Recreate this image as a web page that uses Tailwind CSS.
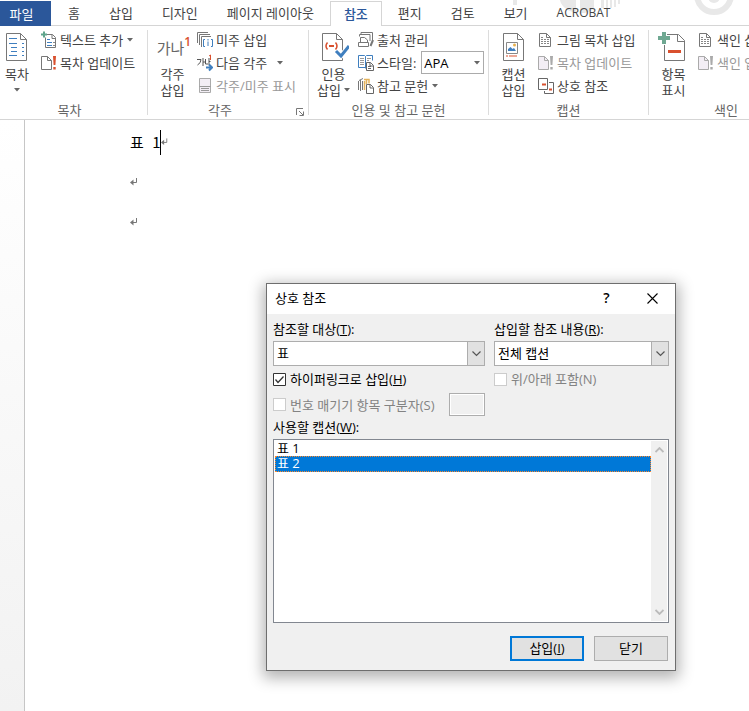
<!DOCTYPE html>
<html lang="ko">
<head>
<meta charset="utf-8">
<title>상호 참조</title>
<script src="https://cdn.jsdelivr.net/npm/@tailwindcss/browser@4"></script>
</head>
<body class="relative flex min-h-screen flex-col overflow-hidden bg-white font-['Open_Sans','Noto_Sans_CJK_KR',sans-serif] text-[13px] leading-4 text-[#444]">

<svg width="0" height="0" class="absolute" aria-hidden="true">
  <defs>
    <symbol id="page" viewBox="0 0 16 16"><path d="M1.500 1.500h7l4 4v9h-11z" fill="#fff" stroke="#777"/><path d="M8.500 1.500v4h4" fill="none" stroke="#777"/><path d="M3 5.500h3M3 7.500h8M3 9.500h8M3 11.500h8" stroke="#888" stroke-dasharray="2 1"/></symbol>
    <symbol id="page-off" viewBox="0 0 16 16"><path d="M.5 1.500h6l4 4v9H.5z" fill="#f3eef5" stroke="#aaa"/><path d="M6.500 1.500v4h4" fill="none" stroke="#aaa"/><path d="M12 1h3l-.6 9h-1.800zM12.300 12h2.400v2.500h-2.400z" fill="#aaa"/></symbol>
    <symbol id="down" viewBox="0 0 6 4"><path d="M0 0h6L3 3.500z" fill="#666"/></symbol>
    <symbol id="return" viewBox="0 0 9 8"><path d="M6.500 0v4.500H1.500" fill="none" stroke="#777"/><path d="M0 4.500L3.500 1.500v6z" fill="#777"/></symbol>
  </defs>
</svg>

<header>
  <svg class="absolute right-0 top-0" width="249" height="26" viewBox="0 0 249 26" fill="#e8e8e8" aria-hidden="true">
    <path d="M13 0h4v5h-4zM60 0h16v13C67 11 61 6 60 0zM80 0h5v13h-5zM85 0h9v8C91 11 88 12 85 13zM101 0h3v8h-3zM106 0h2v8h-2zM110 0h2v8h-2zM114 0h2v7h-2zM118 0h2v4h-2z"/>
    <circle cx="214" cy="-5" r="17" fill="none" stroke="#e8e8e8" stroke-width="6"/><circle cx="214" cy="-3" r="6"/>
  </svg>
  <nav class="relative flex h-[26px] gap-[3px] whitespace-nowrap border-b border-[#d5d5d5] pt-px">
    <button class="mr-px h-[25px] w-[51px] shrink-0 bg-[#2b579a] pr-2 text-white">파일</button>
    <button class="px-[13px]">홈</button>
    <button class="px-[13px]">삽입</button>
    <button class="px-[13px]">디자인</button>
    <button class="px-[13px]">페이지 레이아웃</button>
    <button class="h-[25px] border border-b-0 border-[#d5d5d5] bg-white px-[13px] font-medium text-[#2b579a]">참조</button>
    <button class="px-[13px]">편지</button>
    <button class="px-[13px]">검토</button>
    <button class="px-[13px]">보기</button>
    <button class="px-[13px] text-[12px]">ACROBAT</button>
  </nav>

  <div class="flex overflow-hidden whitespace-nowrap border-b border-[#d5d5d5] pb-px pt-0.5">
    <section class="w-[147px] shrink-0">
      <div class="flex">
        <button class="flex w-[34px] flex-col items-center">
          <span class="flex h-[38px] items-center"><svg width="22" height="30" viewBox="0 0 22 30"><path d="M.5 1.500h14l6 6v21H.5z" fill="#fff" stroke="#777"/><path d="M14.500 1.500v6h6" fill="none" stroke="#777"/><path d="M3 6.500h8M3 11.500h8M5 15.500h6M5 19.500h6M3 23.500h8M16 11.500h2M16 15.500h2M16 19.500h2M16 23.500h2" stroke="#3f7fbf"/></svg></span>
          <span>목차</span>
          <span class="flex h-4 items-center"><svg width="6" height="4"><use href="#down"/></svg></span>
        </button>
        <div class="ml-[7px] flex flex-col">
          <button class="flex h-[23px] items-center gap-[3px]"><svg width="16" height="18" viewBox="0 0 16 18"><path d="M4.500 3.500h7l3 3v10h-10z" fill="#fff" stroke="#777"/><path d="M11 3.500v4h4" fill="none" stroke="#777"/><path d="M6 8.500h3M6 11.500h5M6 14.500h5" stroke="#3f7fbf"/><path d="M12 11.500h2M12 14.500h2" stroke="#888"/><path d="M0 3.500h6M3 .5v6" stroke="#fff" stroke-width="4"/><path d="M0 3.500h6M3 .5v6" stroke="#5fa58c" stroke-width="2"/></svg><span>텍스트 추가</span><svg class="ml-px" width="6" height="4"><use href="#down"/></svg></button>
          <button class="flex h-[23px] items-center gap-[3px]"><svg width="16" height="16" viewBox="0 0 16 16"><path d="M.5 1.500h6l4 4v9H.5z" fill="#fff" stroke="#777"/><path d="M6.500 1.500v4h4" fill="none" stroke="#777"/><path d="M12 1h3l-.6 9h-1.800zM12.300 12h2.400v2.500h-2.400z" fill="#d9502e"/></svg><span>목차 업데이트</span></button>
          <span class="h-[23px]"></span>
        </div>
      </div>
      <h2 class="mt-1 pr-2 text-center text-[#666]">목차</h2>
    </section>
    <div class="mt-0.5 h-[85px] w-px shrink-0 bg-[#dcdcdc]"></div>

    <section class="w-[160px] shrink-0">
      <div class="flex">
        <button class="flex w-[49px] flex-col items-center">
          <span class="flex h-[38px] items-start pl-[3px] pt-2 text-[15px] leading-6 text-[#666]">가나<sup class="top-0 text-[12px] font-semibold leading-3 text-[#d9502e]">1</sup></span>
          <span>각주<br>삽입</span>
        </button>
        <div class="flex flex-col">
          <button class="flex h-[23px] items-center gap-[3px]"><svg width="16" height="16" viewBox="0 0 16 16" fill="none"><path d="M.5 11V.5H11M2.500 13V2.500H13M4.500 15V4.500H14" stroke="#777"/><path d="M8 7.500H6.500v7H8M14 7.500h1.500v7H14M11 9.500V14M11 7v1.500" stroke="#3f7fbf"/></svg><span>미주 삽입</span></button>
          <button class="flex h-[23px] items-center gap-[3px]"><svg width="16" height="18" viewBox="0 0 16 18" fill="none"><path d="M0 5.500h4Q4 9 .5 11M6 4v8M6 8h2M8.500 5v5H11M12 4v7M12 7.500h1.500" stroke="#555"/><path d="M12 2l1.500-1v5" stroke="#d9502e"/><path d="M9 13.500h5M12 10.500l3 3-3 3" stroke="#3f7fbf" stroke-width="2"/></svg><span>다음 각주</span><svg class="ml-[7px]" width="6" height="4"><use href="#down"/></svg></button>
          <button class="flex h-[23px] items-center gap-[3px] text-[#999]" disabled><svg width="16" height="16" viewBox="0 0 16 16"><path d="M2.500.5h11v14h-11z" fill="#f3eef5" stroke="#aaa"/><path d="M2.500 8.500h11M4 10.500h8M4 12.500h8" stroke="#999"/></svg><span>각주/미주 표시</span></button>
        </div>
      </div>
      <div class="relative mt-1">
        <h2 class="pr-4 text-center text-[#666]">각주</h2>
        <button class="absolute bottom-0 right-1" aria-label="각주 옵션"><svg width="8" height="12" viewBox="0 0 8 12" fill="none" stroke="#777"><path d="M.5 9V2.500H7M3 5l4 4M7.500 5.500v4h-4"/></svg></button>
      </div>
    </section>
    <div class="mt-0.5 h-[85px] w-px shrink-0 bg-[#dcdcdc]"></div>

    <section class="w-[179px] shrink-0">
      <div class="flex">
        <button class="flex w-[49px] flex-col items-center">
          <span class="flex h-[38px] items-center pl-0.5"><svg width="28" height="30" viewBox="0 0 28 30"><path d="M1.500 1.500h14l6 6v21h-20z" fill="#fff" stroke="#777"/><path d="M15.500 1.500v6h6" fill="none" stroke="#777"/><path d="M6.500 10.500q-3 3.500 0 7M14.500 10.500q3 3.500 0 7" fill="none" stroke="#d9502e" stroke-width="1.500"/><path d="M8 14h5" stroke="#d9502e" stroke-width="2"/><path d="M15 19l5 5 8-10" fill="none" stroke="#fff" stroke-width="5"/><path d="M15 19l5 5 8-10" fill="none" stroke="#3f7fbf" stroke-width="3"/></svg></span>
          <span>인용</span>
          <span class="flex items-center gap-[3px]">삽입<svg width="6" height="4"><use href="#down"/></svg></span>
        </button>
        <div class="flex flex-col">
          <button class="flex h-[23px] items-center gap-[3px]"><svg width="16" height="16" viewBox="0 0 16 16" fill="none" stroke="#777"><path d="M3 2.500V.5h11.500V8M1.500 4.500v-2h10.500V9M.5 10.500v4h10v-4zM2.500 10V5.500h4l3 2.500v2"/><path d="M12.500 14l2.500-6" stroke-width="2"/></svg><span>출처 관리</span></button>
          <div class="flex h-[23px] items-center gap-[3px]"><svg width="16" height="16" viewBox="0 0 16 16" fill="none"><path d="M7.500 12.500H.5V.5h6l1 1 1-1h6v5M7.500 1.500v12" stroke="#3f7fbf"/><path d="M2 3.500h4M2 5.500h4M2 7.500h4M2 9.500h4M9 3.500h4M9 5.500h2" stroke="#999"/><path d="M8.500 7.500h4l3 3v5h-7z" fill="#fff" stroke="#666"/><path d="M12 7.500v3.500h3M10 11.500h3M10 13.500h3" stroke="#666"/></svg><label for="style">스타일:</label>
            <span class="relative ml-0.5"><select id="style" class="block h-[23px] w-[63px] appearance-none border border-[#ababab] bg-white pl-0.5 text-[13px] text-black"><option>APA</option></select><svg class="pointer-events-none absolute right-1 top-[10px]" width="6" height="4"><use href="#down"/></svg></span>
          </div>
          <button class="flex h-[23px] items-center gap-[3px]"><svg width="16" height="16" viewBox="0 0 16 16" fill="none"><path d="M.5 3v9M2.500 2v11M1 2.500L5 .5M4.500 3v9" stroke="#777"/><path d="M6.500 3v9M8.500 2v4M6 1.500h5v4" stroke="#e3b25c" stroke-width="1.500"/><path d="M8.500 6.500h4l3 3v6h-7z" fill="#fff" stroke="#666"/><path d="M12 6.500V10h3" stroke="#666"/></svg><span>참고 문헌</span><svg class="ml-px" width="6" height="4"><use href="#down"/></svg></button>
        </div>
      </div>
      <h2 class="mt-1 text-center text-[#666]">인용 및 참고 문헌</h2>
    </section>
    <div class="mt-0.5 h-[85px] w-px shrink-0 bg-[#dcdcdc]"></div>

    <section class="w-[159px] shrink-0">
      <div class="flex">
        <button class="flex w-[49px] flex-col items-center">
          <span class="flex h-[38px] items-center"><svg width="22" height="30" viewBox="0 0 22 30"><path d="M.5 1.500h14l6 6v21H.5z" fill="#fff" stroke="#777"/><path d="M14.500 1.500v6h6" fill="none" stroke="#777"/><path d="M3.500 10.500h11v11h-11z" fill="#fff" stroke="#888"/><path d="M5 19v-2l2.500-2 2 2 1.500-1 2 3z" fill="#3f7fbf"/><circle cx="11.500" cy="13" r="1.500" fill="#e8b04c"/><path d="M3 24h2M6 24h8" stroke="#d9502e"/></svg></span>
          <span>캡션<br>삽입</span>
        </button>
        <div class="flex flex-col">
          <button class="flex h-[23px] items-center gap-[3px]"><svg width="16" height="16"><use href="#page"/></svg><span>그림 목차 삽입</span></button>
          <button class="flex h-[23px] items-center gap-[3px] text-[#999]" disabled><svg width="16" height="16"><use href="#page-off"/></svg><span>목차 업데이트</span></button>
          <button class="flex h-[23px] items-center gap-[3px]"><svg width="16" height="16" viewBox="0 0 16 16" fill="none"><path d="M.5.5h9v11h-9z" stroke="#666"/><path d="M11 4.500h4.500v11h-9V13" stroke="#666"/><path d="M4 6.500h4M11 11.500h3" stroke="#d9502e" stroke-width="2"/></svg><span>상호 참조</span></button>
        </div>
      </div>
      <h2 class="mt-1 text-center text-[#666]">캡션</h2>
    </section>
    <div class="mt-0.5 h-[85px] w-px shrink-0 bg-[#dcdcdc]"></div>

    <section class="w-[154px] shrink-0">
      <div class="flex">
        <button class="flex w-[49px] flex-col items-center">
          <span class="flex h-[38px] items-center pr-[5px]"><svg width="28" height="32" viewBox="0 0 28 32"><path d="M7.500 3.500h14l6 6v20h-20z" fill="#fff" stroke="#777"/><path d="M20.500 3.500v7h7" fill="none" stroke="#777"/><path d="M11 20.500h13" stroke="#d9502e" stroke-width="3"/><path d="M0 7h14M7 0v14" stroke="#fff" stroke-width="6"/><path d="M1 7h12M7 1v12" stroke="#6fa892" stroke-width="4"/></svg></span>
          <span>항목<br>표시</span>
        </button>
        <div class="flex flex-col">
          <button class="flex h-[23px] items-center gap-[3px]"><svg width="16" height="16"><use href="#page"/></svg><span>색인 삽입</span></button>
          <button class="flex h-[23px] items-center gap-[3px] text-[#999]" disabled><svg width="16" height="16"><use href="#page-off"/></svg><span>색인 업데이트</span></button>
          <span class="h-[23px]"></span>
        </div>
      </div>
      <h2 class="mt-1 text-center text-[#666]">색인</h2>
    </section>
  </div>
</header>

<main class="flex flex-1">
  <aside class="w-[25px] shrink-0 border-r border-[#c6c6c6] bg-linear-to-b from-white to-[#f2f2f2]"></aside>
  <article class="flex-1 pl-[105px] pt-0.5 font-['Noto_Sans_CJK_KR',sans-serif] text-[15px] leading-10 text-black">
    <p class="flex h-10 items-center"><span class="whitespace-pre">표  1</span><span class="-ml-px h-[25px] w-px bg-black"></span><svg width="8" height="8"><use href="#return"/></svg></p>
    <p class="flex h-10 items-center"><svg width="9" height="8"><use href="#return"/></svg></p>
    <p class="flex h-10 items-center"><svg width="9" height="8"><use href="#return"/></svg></p>
  </article>
</main>

<div role="dialog" aria-labelledby="title" class="absolute left-[266px] top-[283px] w-[410px] border border-[#6e6e6e] bg-[#f0f0f0] text-black shadow-[0_4px_14px_3px_rgba(0,0,0,0.3)]">
  <div class="flex h-[30px] items-center bg-white pb-0.5 pl-2">
    <h1 id="title" class="flex-1">상호 참조</h1>
    <button class="w-[45px] text-[14px] font-semibold" aria-label="도움말">?</button>
    <button class="flex w-[46px] justify-center" aria-label="창 닫기"><svg width="11" height="11" viewBox="0 0 11 11"><path d="M.5.5l10 10M10.500.5l-10 10" stroke="#000" stroke-width="1.100"/></svg></button>
  </div>
  <div class="px-1.5 pb-[9px] pt-[7px]">
    <div class="grid grid-cols-[212px_1fr] gap-x-[9px]">
      <div>
        <label for="target">참조할 대상(<u>T</u>):</label>
        <div class="relative mt-1">
          <select id="target" class="block h-[25px] w-full appearance-none border border-[#adadad] bg-white pb-0.5 pl-[3px] text-[13px]"><option>표</option></select>
          <span class="pointer-events-none absolute inset-y-0 right-0 flex w-[18px] items-center justify-center border border-[#adadad] bg-[#e1e1e1]"><svg width="9" height="6" viewBox="0 0 9 6"><path d="M.5.5l4 4 4-4" fill="none" stroke="#555" stroke-width="1.200"/></svg></span>
        </div>
        <label class="mt-[5px] flex items-center gap-1"><input type="checkbox" checked class="peer sr-only"><svg class="bg-white" width="13" height="13" viewBox="0 0 13 13" fill="none"><path d="M.5.5h12v12H.5z" stroke="#333"/><path d="M2.500 6.500l2.500 3 5.500-6" stroke="#333" stroke-width="1.300"/></svg><span>하이퍼링크로 삽입(<u>H</u>)</span></label>
      </div>
      <div>
        <label for="content">삽입할 참조 내용(<u>R</u>):</label>
        <div class="relative mt-1">
          <select id="content" class="block h-[25px] w-full appearance-none border border-[#adadad] bg-white pb-0.5 pl-[3px] text-[13px]"><option>전체 캡션</option></select>
          <span class="pointer-events-none absolute inset-y-0 right-0 flex w-[18px] items-center justify-center border border-[#adadad] bg-[#e1e1e1]"><svg width="9" height="6" viewBox="0 0 9 6"><path d="M.5.5l4 4 4-4" fill="none" stroke="#555" stroke-width="1.200"/></svg></span>
        </div>
        <label class="mt-[5px] flex items-center gap-1 text-[#838383]"><input type="checkbox" disabled class="size-[13px] appearance-none border border-[#ccc] bg-white"><span>위/아래 포함(N)</span></label>
      </div>
    </div>
    <div class="mt-1.5 flex items-center gap-3.5 text-[#838383]">
      <label class="flex items-center gap-1"><input type="checkbox" disabled class="size-[13px] appearance-none border border-[#ccc] bg-white"><span>번호 매기기 항목 구분자(S)</span></label>
      <input type="text" disabled aria-label="구분자" class="h-[23px] w-9 border border-[#adadad] bg-[#f0f0f0] shadow-[inset_0_0_0_1px_#fff]">
    </div>
    <h2 id="captions" class="mt-[3px]">사용할 캡션(<u>W</u>):</h2>
    <div class="mt-1 flex h-[184px] border border-[#828790] bg-white p-px">
      <ul role="listbox" aria-labelledby="captions" class="flex-1">
        <li role="option" aria-selected="false" class="h-[15px] pl-0.5 leading-[15px]">표 1</li>
        <li role="option" aria-selected="true" class="h-4 border border-dotted border-[#ff8728] bg-[#0078d7] pl-px leading-[13px] text-white">표 2</li>
      </ul>
      <div class="flex w-4 flex-col items-center justify-between bg-[#f0f0f0] py-1.5" aria-hidden="true">
        <svg width="9" height="6" viewBox="0 0 9 6"><path d="M.5 5l4-4 4 4" fill="none" stroke="#bbb" stroke-width="1.800"/></svg>
        <svg width="9" height="6" viewBox="0 0 9 6"><path d="M.5 1l4 4 4-4" fill="none" stroke="#bbb" stroke-width="1.800"/></svg>
      </div>
    </div>
    <div class="mt-[13px] flex justify-end gap-2.5 pr-px">
      <button class="h-[25px] w-[74px] border-2 border-[#0078d7] bg-[#e1e1e1] pb-0.5">삽입(<u>I</u>)</button>
      <button class="h-[25px] w-[74px] border border-[#adadad] bg-[#e1e1e1] pb-0.5">닫기</button>
    </div>
  </div>
</div>
</body>
</html>
